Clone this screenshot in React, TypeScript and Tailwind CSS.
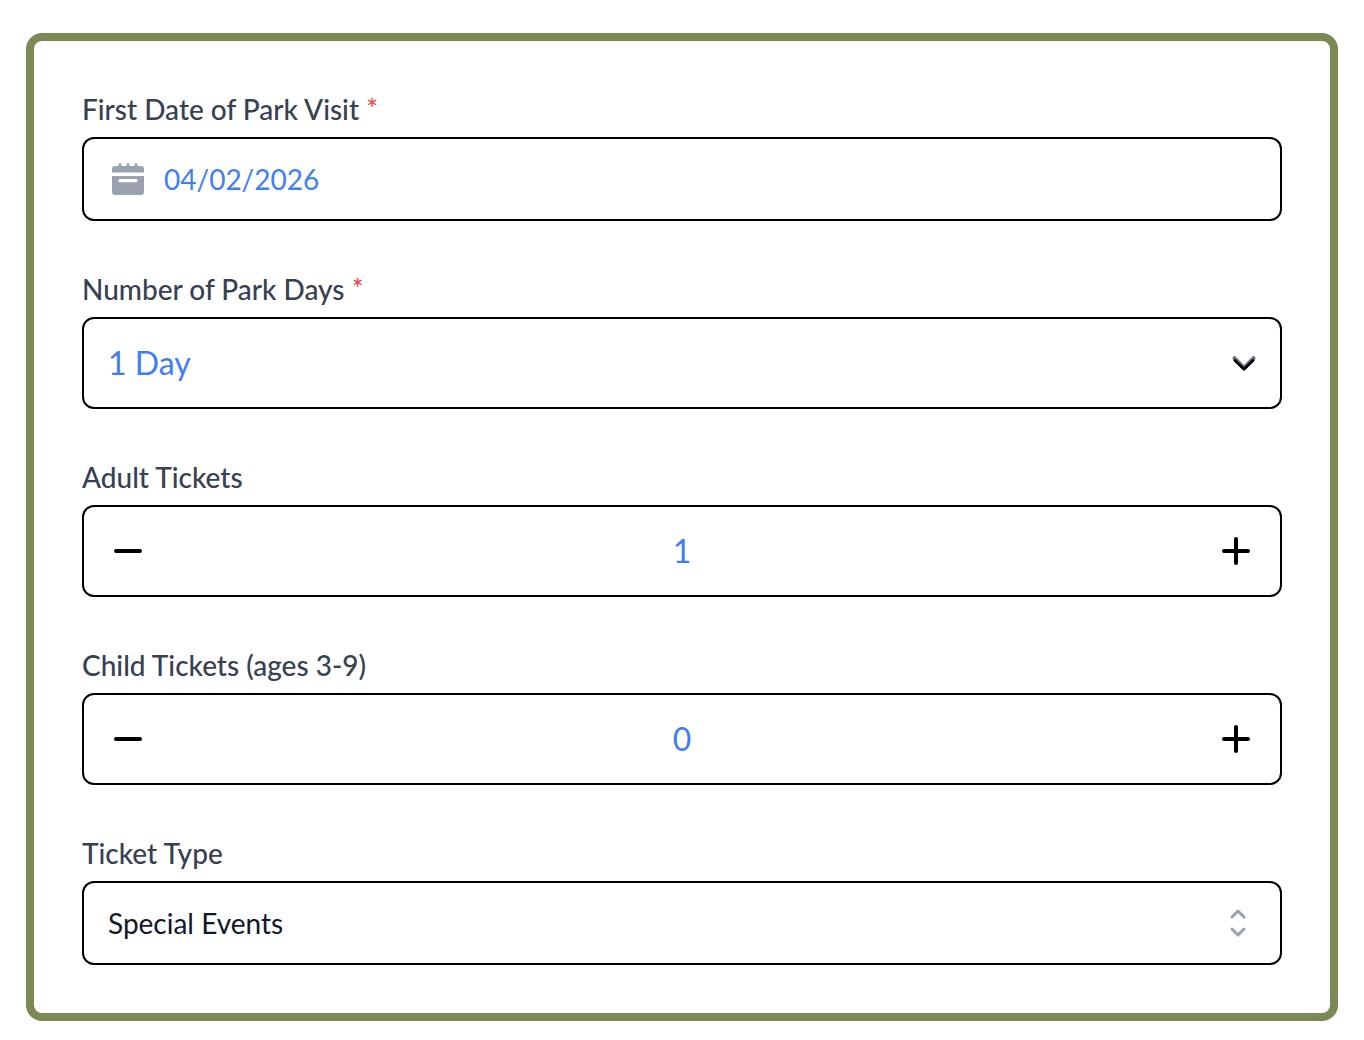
import { useState } from "react";

interface IFieldProps {
  id: string;
  label: string;
  required?: boolean;
  children: React.ReactNode;
}

const Field = ({ id, label, required, children }: IFieldProps) => (
  <div>
    <label
      htmlFor={id}
      className="block mb-2 text-[28px] leading-10 font-medium text-[#374151]"
    >
      {label}
      {required && <span className="font-normal text-[#ef4444]"> *</span>}
    </label>
    {children}
  </div>
);

interface ICounterProps {
  id: string;
  name: string;
  value: number;
  onChange: (value: number) => void;
}

const Counter = ({ id, name, value, onChange }: ICounterProps) => (
  <div className="flex items-center h-[92px] px-7 border-2 border-black rounded-xl">
    <button
      type="button"
      aria-label={`Remove ${name}`}
      onClick={() => onChange(Math.max(0, value - 1))}
      className="shrink-0"
    >
      <svg viewBox="0 0 32 32" className="size-8" stroke="#000" strokeWidth="4" strokeLinecap="round">
        <path d="M4 16h24" />
      </svg>
    </button>
    <input
      id={id}
      type="text"
      inputMode="numeric"
      value={value}
      onChange={(e) => onChange(Number(e.target.value) || 0)}
      className="flex-1 min-w-0 text-center text-[32px] leading-10 text-[#3f7ef7] focus:outline-none"
    />
    <button
      type="button"
      aria-label={`Add ${name}`}
      onClick={() => onChange(value + 1)}
      className="shrink-0"
    >
      <svg viewBox="0 0 32 32" className="size-8" stroke="#000" strokeWidth="4" strokeLinecap="round">
        <path d="M4 16h24M16 4v24" />
      </svg>
    </button>
  </div>
);

const App = () => {
  const [date, setDate] = useState<string>("04/02/2026");
  const [days, setDays] = useState<string>("1 Day");
  const [adults, setAdults] = useState<number>(1);
  const [children, setChildren] = useState<number>(0);
  const [ticketType, setTicketType] = useState<string>("Special Events");

  return (
    <main className="min-h-screen bg-white px-[26px] pt-[33px] pb-[19px] font-['Lato',sans-serif]">
      <form className="flex flex-col gap-12 p-12 border-8 border-[#7b8a54] rounded-2xl">
        <Field id="date" label="First Date of Park Visit" required>
          <div className="flex items-center gap-5 h-[84px] px-7 border-2 border-black rounded-xl">
            <svg viewBox="0 0 32 32" className="size-8 shrink-0" fill="#9ca1b0">
              <path d="M0 9.500V6a3 3 0 0 1 3-3h3.500V1.500a1.500 1.500 0 0 1 3 0V3h5V1.500a1.500 1.500 0 0 1 3 0V3h5V1.500a1.500 1.500 0 0 1 3 0V3H29a3 3 0 0 1 3 3v3.500z" />
              <path
                fillRule="evenodd"
                d="M0 13h32v16a3 3 0 0 1-3 3H3a3 3 0 0 1-3-3zM8 16a1.600 1.600 0 0 0 0 3.200h16a1.600 1.600 0 0 0 0-3.200z"
              />
            </svg>
            <input
              id="date"
              type="text"
              value={date}
              onChange={(e) => setDate(e.target.value)}
              className="flex-1 min-w-0 text-[28px] leading-10 text-[#3f7ef7] focus:outline-none"
            />
          </div>
        </Field>

        <Field id="days" label="Number of Park Days" required>
          <div className="relative">
            <select
              id="days"
              value={days}
              onChange={(e) => setDays(e.target.value)}
              className="block w-full h-[92px] px-6 appearance-none border-2 border-black rounded-xl text-[32px] text-[#3f7ef7] focus:outline-none"
            >
              <option>1 Day</option>
              <option>2 Days</option>
              <option>3 Days</option>
            </select>
            <svg
              viewBox="0 0 32 32"
              className="absolute inset-y-0 right-[22px] my-auto size-8 pointer-events-none"
              fill="none"
              strokeLinecap="round"
              strokeLinejoin="round"
            >
              <path d="M6.400 11.200l9.600 9.600 9.600-9.600" stroke="#6b7280" strokeWidth="4" />
              <path d="M7 13.400l9 8.800 9-8.800" stroke="#000" strokeWidth="2.800" />
            </svg>
          </div>
        </Field>

        <Field id="adults" label="Adult Tickets">
          <Counter id="adults" name="adult ticket" value={adults} onChange={setAdults} />
        </Field>

        <Field id="children" label="Child Tickets (ages 3-9)">
          <Counter id="children" name="child ticket" value={children} onChange={setChildren} />
        </Field>

        <Field id="type" label="Ticket Type">
          <div className="relative">
            <select
              id="type"
              value={ticketType}
              onChange={(e) => setTicketType(e.target.value)}
              className="block w-full h-[84px] px-6 appearance-none border-2 border-black rounded-xl text-[28px] text-[#111827] focus:outline-none"
            >
              <option>Special Events</option>
              <option>Theme Park</option>
            </select>
            <svg
              viewBox="0 0 20 20"
              className="absolute inset-y-0 right-6 my-auto size-10 pointer-events-none"
              fill="none"
              stroke="#9ca1b0"
              strokeWidth="1.500"
              strokeLinecap="round"
              strokeLinejoin="round"
            >
              <path d="M7 7l3-3 3 3m0 6l-3 3-3-3" />
            </svg>
          </div>
        </Field>
      </form>
    </main>
  );
};

export default App;
